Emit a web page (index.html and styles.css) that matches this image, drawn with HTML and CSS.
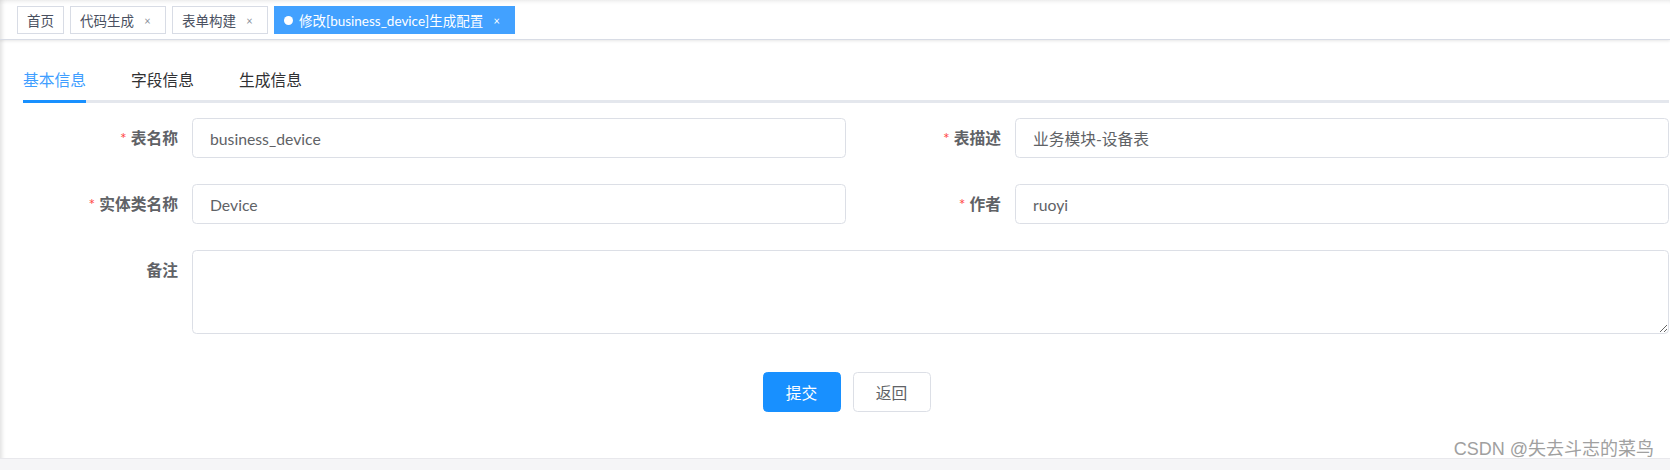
FILE: index.html
```html
<!DOCTYPE html>
<html lang="zh-CN">
<head>
<meta charset="utf-8">
<title>修改生成配置</title>
<link rel="stylesheet" href="styles.css">
</head>
<body>
<div class="app">
  <div class="tags-bar">
    <span class="tag">首页</span>
    <span class="tag">代码生成<span class="tag-close">×</span></span>
    <span class="tag">表单构建<span class="tag-close">×</span></span>
    <span class="tag tag-active"><span class="tag-dot"></span>修改[business_device]生成配置<span class="tag-close">×</span></span>
  </div>
  <div class="main">
    <div class="tabs">
      <div class="tab tab-active">基本信息</div>
      <div class="tab">字段信息</div>
      <div class="tab">生成信息</div>
    </div>
    <form class="form">
      <div class="form-item">
        <label class="form-label"><span class="req">*</span>表名称</label>
        <div class="form-control"><input class="input" value="business_device"></div>
      </div>
      <div class="form-item">
        <label class="form-label"><span class="req">*</span>表描述</label>
        <div class="form-control"><input class="input" value="业务模块-设备表"></div>
      </div>
      <div class="form-item">
        <label class="form-label"><span class="req">*</span>实体类名称</label>
        <div class="form-control"><input class="input" value="Device"></div>
      </div>
      <div class="form-item">
        <label class="form-label"><span class="req">*</span>作者</label>
        <div class="form-control"><input class="input" value="ruoyi"></div>
      </div>
      <div class="form-item form-item-full">
        <label class="form-label">备注</label>
        <div class="form-control"><textarea class="textarea"></textarea></div>
      </div>
    </form>
    <div class="actions">
      <button class="btn btn-primary" type="button">提交</button>
      <button class="btn" type="button">返回</button>
    </div>
  </div>
  <div class="bottom-strip"></div>
  <div class="watermark">CSDN @失去斗志的菜鸟</div>
</div>
</body>
</html>
```
FILE: styles.css
```css
* { box-sizing: border-box; }
html, body {
  margin: 0;
  padding: 0;
  width: 1670px;
  height: 470px;
  overflow: hidden;
  font-family: Lato, "Noto Sans CJK SC", sans-serif;
  background: #fff;
}
.app {
  position: relative;
  height: 470px;
  display: flex;
  flex-direction: column;
  background: #fff;
  box-shadow: inset 3px 0 4px -1px rgba(0, 0, 0, 0.12);
}
.tags-bar {
  height: 40px;
  flex: none;
  display: flex;
  align-items: flex-start;
  gap: 6px;
  padding: 6px 0 0 17px;
  border-bottom: 1px solid #d8dce5;
  box-shadow: 0 1px 3px 0 rgba(0, 0, 0, 0.1);
  background: linear-gradient(rgba(0, 0, 0, 0.04), rgba(0, 0, 0, 0) 5px);
}
.tag {
  display: inline-flex;
  align-items: center;
  height: 28px;
  padding: 0 9px;
  border: 1px solid #d8dce5;
  color: #495060;
  font-size: 13.5px;
  background: #fff;
  white-space: nowrap;
}
.tag-close {
  display: inline-block;
  width: 17px;
  margin-left: 5px;
  text-align: center;
  font-size: 11px;
  color: #8a8f99;
}
.tag-active {
  background: #42a1ff;
  border-color: #42a1ff;
  color: #fff;
}
.tag-active .tag-close { color: #fff; }
.tag-dot {
  width: 9px;
  height: 9px;
  border-radius: 50%;
  background: #fff;
  margin-right: 6px;
}
.main {
  flex: 1;
  padding: 18px 1px 0 23px;
}
.tabs {
  position: relative;
  display: flex;
  height: 45px;
}
.tabs::after {
  content: "";
  position: absolute;
  left: 0;
  right: 0;
  bottom: 0;
  height: 3px;
  background: #e4e7ed;
}
.tab {
  position: relative;
  height: 45px;
  line-height: 44px;
  padding: 0 22.5px;
  font-size: 15.75px;
  color: #303133;
  z-index: 1;
}
.tab:first-child { padding-left: 0; }
.tab-active { color: #409eff; }
.tab-active::after {
  content: "";
  position: absolute;
  left: 0;
  right: 22.5px;
  bottom: 0;
  height: 3px;
  background: #1890ff;
}
.form {
  display: grid;
  grid-template-columns: 1fr 1fr;
  row-gap: 26px;
  margin-top: 15px;
}
.form-item {
  display: flex;
  align-items: flex-start;
}
.form-item-full { grid-column: 1 / 3; }
.form-label {
  flex: none;
  width: 169px;
  padding-right: 14px;
  text-align: right;
  line-height: 40px;
  font-size: 15.75px;
  font-weight: 700;
  color: #606266;
}
.req {
  color: #ff4949;
  margin-right: 4px;
  font-weight: 400;
}
.form-control { flex: 1; }
.input {
  display: block;
  width: 100%;
  height: 40px;
  padding: 0 17px;
  border: 1px solid #dcdfe6;
  border-radius: 4.5px;
  font-family: inherit;
  font-size: 15.75px;
  color: #606266;
  background: #fff;
  outline: none;
}
.textarea {
  display: block;
  width: 100%;
  height: 84px;
  padding: 6px 17px;
  border: 1px solid #dcdfe6;
  border-radius: 4.5px;
  font-family: inherit;
  font-size: 15.75px;
  color: #606266;
  resize: vertical;
  outline: none;
}
.actions {
  display: flex;
  justify-content: center;
  gap: 12px;
  margin-top: 38px;
  padding-left: 1px;
}
.btn {
  width: 78px;
  height: 40px;
  border: 1px solid #dcdfe6;
  border-radius: 4.5px;
  background: #fff;
  color: #606266;
  font-family: inherit;
  font-size: 15.75px;
  padding: 0;
}
.btn-primary {
  background: #1890ff;
  border-color: #1890ff;
  color: #fff;
}
.bottom-strip {
  flex: none;
  height: 12px;
  background: #f5f5f7;
  border-top: 1px solid #e8e8ec;
}
.watermark {
  position: absolute;
  right: 16px;
  bottom: 10px;
  font-family: "Liberation Sans", "Noto Sans CJK SC", sans-serif;
  font-size: 18px;
  color: #a0a0a0;
  text-shadow: 0 0 1px #fff, 0 0 2px #fff;
  white-space: nowrap;
}
```
